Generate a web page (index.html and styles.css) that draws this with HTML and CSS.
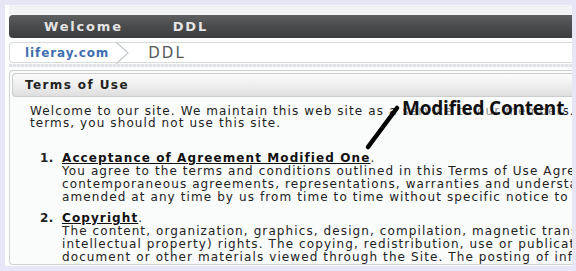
FILE: index.html
```html
<!DOCTYPE html>
<html>
<head>
<meta charset="utf-8">
<link rel="stylesheet" href="styles.css">
</head>
<body>
<div class="frame">
  <div class="topstripe"></div>
  <nav class="nav">
    <span class="nav-item welcome">Welcome</span>
    <span class="nav-item">DDL</span>
  </nav>
  <div class="crumbs">
    <span class="crumb-link">liferay.com</span>
    <svg class="chev" width="18" height="22" viewBox="0 0 18 22"><polyline points="2,0 14,11 2,22" fill="none" stroke="#c4c8cc" stroke-width="1.2"/></svg>
    <span class="crumb-cur">DDL</span>
  </div>
  <div class="sep"></div>
  <section class="panel">
    <header class="panel-head">Terms of Use</header>
    <div class="panel-body">
      <p class="intro">
        <span class="line">Welcome to our site. We maintain this web site as a service to our members. By using our site, you agree</span>
        <span class="line">terms, you should not use this site.</span>
      </p>
      <ol class="items">
        <li class="item">
          <span class="num">1.</span>
          <div class="item-text">
            <span class="line"><u class="title">Acceptance of Agreement Modified One</u>.</span>
            <span class="line">You agree to the terms and conditions outlined in this Terms of Use Agreement with respect</span>
            <span class="line">contemporaneous agreements, representations, warranties and understandings of the Site</span>
            <span class="line">amended at any time by us from time to time without specific notice to you. The latest</span>
          </div>
        </li>
        <li class="item">
          <span class="num">2.</span>
          <div class="item-text">
            <span class="line"><u class="title">Copyright</u>.</span>
            <span class="line">The content, organization, graphics, design, compilation, magnetic translation, digital</span>
            <span class="line">intellectual property) rights. The copying, redistribution, use or publication by you of</span>
            <span class="line">document or other materials viewed through the Site. The posting of information or</span>
          </div>
        </li>
      </ol>
    </div>
  </section>
  <div class="note">Modified Content</div>
  <svg class="pointer" width="46" height="56" viewBox="0 0 46 56"><line x1="37" y1="10" x2="8" y2="49" stroke="#000" stroke-width="4.5" stroke-linecap="round"/></svg>
</div>
</body>
</html>
```

FILE: styles.css
```css
html, body {
  margin: 0;
  padding: 0;
}
body {
  background: #e6e6f7;
  width: 576px;
  height: 271px;
  overflow: hidden;
}
.frame {
  position: relative;
  margin: 5px 4px 0 5px;
  height: 261px;
  background: #fcfdfd;
  padding-left: 4px;
  overflow: hidden;
  font-family: "DejaVu Sans", "Liberation Sans", sans-serif;
}
.topstripe {
  height: 10px;
  background: repeating-linear-gradient(0deg, #f3f5f6 0 2px, #eceef0 2px 3px);
}
.nav {
  height: 23px;
  display: flex;
  align-items: center;
  background: linear-gradient(#5c5e60, #47494b 55%, #3b3d3f);
  border-radius: 4px 0 0 4px;
  padding-left: 35px;
  gap: 50px;
}
.nav-item {
  color: #e4e4e4;
  font-weight: bold;
  font-size: 13px;
  letter-spacing: 1.8px;
}
.crumbs {
  margin-top: 4px;
  height: 21px;
  display: flex;
  align-items: center;
  background: #fff;
  border: 1px solid #d8dadc;
  border-right: none;
  border-radius: 4px 0 0 4px;
  padding-left: 15px;
  box-sizing: border-box;
}
.crumb-link {
  color: #3d6fb0;
  font-weight: bold;
  font-size: 12px;
  letter-spacing: 0.9px;
}
.chev {
  margin-left: 5px;
  margin-right: 16px;
  display: block;
}
.crumb-cur {
  color: #58595b;
  font-size: 15px;
  letter-spacing: 2px;
}
.sep {
  margin-top: 1px;
  height: 3px;
  background: repeating-linear-gradient(90deg, #dfe3e7 0 3px, #eef0f2 3px 4px);
}
.panel {
  margin-top: 3px;
  border: 1px solid #cfd1d3;
  border-right: none;
  border-radius: 4px 0 0 4px;
  height: 195px;
  box-sizing: border-box;
  padding: 2px 0 0 2px;
  background: #fafbfb;
}
.panel-head {
  height: 22px;
  display: flex;
  align-items: center;
  padding-left: 12px;
  background: linear-gradient(#fbfbfb, #ececec 60%, #dedede);
  border: 1px solid #cdcdcd;
  border-right: none;
  border-radius: 4px 0 0 4px;
  font-weight: bold;
  font-size: 12px;
  letter-spacing: 1.4px;
  color: #222;
}
.panel-body {
  padding-left: 18px;
  font-size: 12px;
  letter-spacing: 1.1px;
  color: #222;
  line-height: 12px;
}
.line {
  display: block;
  white-space: nowrap;
}
.intro {
  margin: 8px 0 0 0;
}
.items {
  list-style: none;
  margin: 23px 0 0 0;
  padding: 0 0 0 10px;
  display: flex;
  flex-direction: column;
  gap: 8px;
}
.item {
  display: flex;
}
.num {
  width: 22px;
  flex: none;
  font-weight: bold;
  letter-spacing: 0.5px;
}
.item-text .line {
  line-height: 13px;
}
.title {
  font-weight: bold;
  color: #111;
}
.note {
  position: absolute;
  left: 397px;
  top: 92px;
  font-family: "Open Sans", "DejaVu Sans", sans-serif;
  font-weight: bold;
  font-size: 19px;
  letter-spacing: -0.2px;
  color: #111;
  background: rgba(250, 251, 251, 0.5);
  line-height: 22px;
}
.pointer {
  position: absolute;
  left: 355px;
  top: 93px;
}
```
